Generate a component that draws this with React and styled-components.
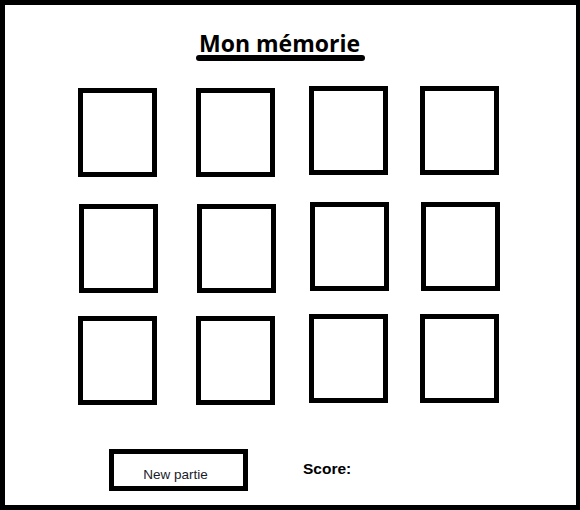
import React from 'react';
import styled, { createGlobalStyle } from 'styled-components';

const GlobalStyle = createGlobalStyle`
  html, body {
    margin: 0;
    padding: 0;
    background: #fff;
  }
`

const Frame = styled.div`
  box-sizing: border-box;
  width: 580px;
  height: 510px;
  border: 5px solid #000;
  border-right-width: 4px;
  display: flex;
  flex-direction: column;
  font-family: "Open Sans", "Liberation Sans", sans-serif;
`

const Header = styled.div`
  display: flex;
  justify-content: flex-start;
  padding-left: 191px;
  padding-top: 23px;
`

const Title = styled.h1`
  margin: 0;
  font-size: 23px;
  font-weight: 700;
  line-height: 30px;
  color: #000;
  position: relative;
  padding: 0 5px 0 3px;
  &::after {
    content: '';
    position: absolute;
    left: 0;
    right: 0;
    bottom: -3px;
    height: 6px;
    border-radius: 3px;
    background: #000;
  }
`

// column / row tracks: each track starts where a card starts
const Board = styled.div`
  display: grid;
  grid-template-columns: 118px 113px 111px 79px;
  grid-template-rows: 116px 112px 89px;
  margin-top: 28px;
  margin-left: 73px;
`

const Card = styled.div`
  box-sizing: border-box;
  width: 79px;
  height: 89px;
  border: 5px solid #000;
  background: #fff;
  margin-top: ${p => p.dy || 0}px;
  margin-left: ${p => p.dx || 0}px;
`

const Footer = styled.div`
  display: flex;
  align-items: center;
  margin-top: 46px;
  padding-left: 104px;
`

const Button = styled.button`
  box-sizing: border-box;
  width: 139px;
  height: 42px;
  border: 5px solid #000;
  background: #fff;
  font-family: "Liberation Sans", Arial, sans-serif;
  font-size: 13.5px;
  color: #1b1b2b;
  padding: 8px 6px 0 0;
  cursor: pointer;
`

const Score = styled.span`
  margin-left: 55px;
  margin-top: -2px;
  font-family: "Liberation Sans", Arial, sans-serif;
  font-weight: 700;
  font-size: 15.5px;
  color: #000;
`

const cards = [
  [0, 2], [0, 2], [0, 0], [0, 0],
  [1, 2], [1, 2], [1, 0], [1, 0],
  [0, 2], [0, 2], [0, 0], [0, 0],
]

export default function App() {
  return (
    <>
      <GlobalStyle />
      <Frame>
        <Header>
          <Title>Mon mémorie</Title>
        </Header>
        <Board>
          {cards.map(([dx, dy], i) => (
            <Card key={i} dx={dx} dy={dy} />
          ))}
        </Board>
        <Footer>
          <Button>New partie</Button>
          <Score>Score:</Score>
        </Footer>
      </Frame>
    </>
  );
}
